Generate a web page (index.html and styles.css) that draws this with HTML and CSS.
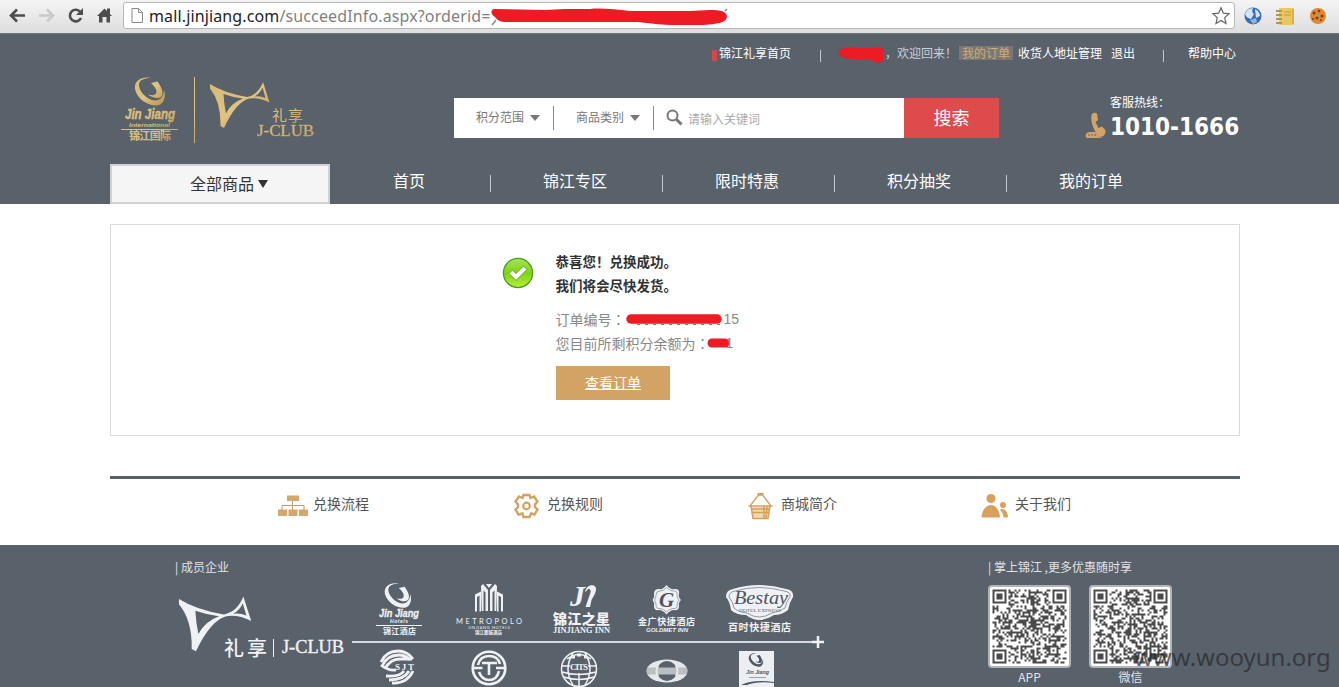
FILE: index.html
```html
<!DOCTYPE html>
<html lang="zh-CN">
<head>
<meta charset="utf-8">
<title>锦江礼享</title>
<link rel="stylesheet" href="styles.css">
</head>
<body>
<div class="browser">
  <svg class="tools" width="124" height="33" viewBox="0 0 124 33">
    <g fill="none" stroke="#4d4d4d" stroke-width="2.6">
      <path d="M11 15.5H25M17 9.5L11 15.5L17 21.5"/>
      <path stroke="#c9c9c9" d="M39 15.5H53M47 9.5L53 15.5L47 21.5"/>
      <path d="M80.500 12.200A5.800 5.800 0 1 0 81 18"/>
    </g>
    <path fill="#4d4d4d" d="M83 8v7h-7z"/>
    <path fill="#4d4d4d" d="M97 16L104.500 8.500L107 11V8.500H110V14L112 16H110V22.500H106.500V17H102.500V22.500H99V16z"/>
  </svg>
  <div class="address">
    <svg width="13" height="17" viewBox="0 0 13 17"><path d="M1 1.500H7.500L11.500 5.500V15.500H1zM7.500 1.500V5.500H11.500" fill="#fff" stroke="#8a8a8a"/></svg>
    <span class="url"><b>mall.jinjiang.com</b>/succeedInfo.aspx?orderid=</span>
    <svg class="redact" width="240" height="20" viewBox="0 0 240 20"><path d="M2 19l4-5M235 5l2-2" stroke="#888" stroke-width="1.500"/><path d="M4 3C0 4 1 9 5 11C8 15 11 16 16 16H148C165 18 172 19 184 19H214C226 18 236 17 237 11C237 5 230 4 220 4L200 5H140C125 3 110 2 100 3H75L55 4z" fill="#ed1c24"/></svg>
    <svg class="star" width="20" height="20" viewBox="0 0 20 20"><path d="M10 1.800L12.300 7.200L18 7.700L13.700 11.600L15 17.500L10 14.400L5 17.500L6.300 11.600L2 7.700L7.700 7.200z" fill="#fff" stroke="#666" stroke-width="1.200"/></svg>
  </div>
  <svg class="exts" width="100" height="33" viewBox="0 0 100 33">
    <circle cx="18" cy="16" r="8.500" fill="#3a69b5"/><path d="M10 14q2-6 8-6q-2 4 1 6l-3 5q-5-1-6-5M20 9q5 3 5 7l-4 2z" fill="#d4e4f6"/><path d="M15 20l6-2l1 4l-4 2z" fill="#8eb4de"/>
    <rect x="44" y="8" width="15" height="17" rx="1" fill="#e9c763"/><path d="M41 11h6M41 15h6M41 19h6M41 23h6" stroke="#b79643" stroke-width="2"/><path d="M49 12h7M49 15h7M58 9v15" stroke="#c49c35"/>
    <circle cx="83" cy="16" r="8" fill="#dc8b34"/><g fill="#7b3d12"><circle cx="79" cy="13" r="1.500"/><circle cx="84" cy="11" r="1.300"/><circle cx="87" cy="16" r="1.500"/><circle cx="82" cy="18" r="1.500"/><circle cx="86" cy="20" r="1"/><circle cx="78" cy="19" r="1"/></g>
  </svg>
</div>

<header class="header">
  <div class="topline">
    <i class="flag"></i><a class="home">锦江礼享首页</a><i class="bar bar-a"></i>
    <svg class="name" width="48" height="18" viewBox="0 0 48 18"><path d="M3 4C8 0 20 2 32 2C40 2 46 0 46 4V14C44 18 39 17 36 15C31 12 21 14 14 13C6 12-2 9 3 4z" fill="#ed1c24"/></svg>
    <span class="welcome">，欢迎回来<span class="mid">！</span></span><a class="orders">我的订单</a><a class="addr">收货人地址管理</a><a class="quit">退出</a><i class="bar bar-b"></i><a class="help">帮助中心</a>
  </div>
  <div class="brandrow">
    <svg class="logo" width="230" height="84" viewBox="110 66 230 84">
      <defs><linearGradient id="gold" x1="0" y1="0" x2="1" y2="1"><stop offset="0" stop-color="#d9b876"/><stop offset=".5" stop-color="#dfc382"/><stop offset="1" stop-color="#b98f4c"/></linearGradient></defs>
      <g fill="url(#gold)">
        <path id="ring" d="M151 78C140 76 134 82 135 89C137 99 148 106 157 105.500C163 105 166.500 98 164 90C163.500 97 160 101 154 100.500C146 99 139 91 139 85C139 80 144 78 151 78zM151 83L157.500 81.500C161.500 87 163.500 92 162 95.500C160 99.500 153 98.500 148 94.500C153 96 156.500 95 156.500 92C156.500 89 155 87 151 83z"/>
        <text x="125" y="119" class="script" font-size="14" stroke="#dfc382" stroke-width=".4" textLength="50" lengthAdjust="spacingAndGlyphs">Jin Jiang</text>
        <text x="129" y="127" class="script" font-size="6" textLength="41" lengthAdjust="spacingAndGlyphs">International</text>
        <rect x="121" y="129" width="57" height="1"/>
        <text x="129" y="140" class="cn" font-size="11" font-weight="700" textLength="42">锦江国际</text>
        <rect x="194" y="77" width="1" height="66"/>
        <path id="mark" fill-rule="evenodd" d="M210 84Q224 93 247 97Q258 95 263 82L269.500 102.500Q259 97 249 98.500Q236 102 224 128L220.500 126Q221 102 210 88.500zM223.500 94Q224 104 226 113.500Q231 103 243 98.500Q233 97.500 223.500 94zM254.500 96.500Q260 93.500 262.500 87.500L265.500 98Q260 95.500 254.500 96.500z"/>
        <text x="272" y="121" class="cn" font-size="15" textLength="31">礼享</text>
        <text x="257" y="136" class="roman" font-size="17" stroke="#c9a562" stroke-width=".3" textLength="57" lengthAdjust="spacingAndGlyphs">J-CLUB</text>
      </g>
    </svg>
    <div class="search">
      <div class="pick">积分范围<i class="tri"></i></div>
      <div class="pick">商品类别<i class="tri"></i></div>
      <svg width="18" height="18" viewBox="0 0 18 18"><circle cx="6.500" cy="6.500" r="5" fill="none" stroke="#777" stroke-width="2"/><path d="M10.500 10.500L15.500 15.500" stroke="#777" stroke-width="3"/></svg>
      <span class="hint">请输入关键词</span>
    </div>
    <div class="go">搜索</div>
    <div class="hotline">
      <svg width="22" height="27" viewBox="0 0 22 27"><path d="M7 2Q9 0 12 1.500L13 8L10.500 10L13.500 16L17 14.500L20.500 18Q21 22 17.500 24.500C13.500 26 11 22 9 17C6.500 11 5.500 6 7 2z" fill="#d3a468"/><path d="M1 22Q2 20 5 20H10L13 24L17 26H2Q0 25 1 22z" fill="#d3a468"/><path d="M3 23h9" stroke="#59616b" stroke-width="1" stroke-dasharray="2 1"/></svg>
      <div><p class="hot-label">客服热线<span class="mid">：</span></p><p class="hot-no">1010-1666</p></div>
    </div>
  </div>
  <nav class="nav">
    <div class="all">全部商品<i class="tri dark"></i></div>
    <a>首页</a><a>锦江专区</a><a>限时特惠</a><a>积分抽奖</a><a>我的订单</a>
  </nav>
</header>

<main class="main">
  <section class="card">
    <svg class="ok" width="32" height="32" viewBox="0 0 32 32"><defs><linearGradient id="lime" x1="0" y1="0" x2="0" y2="1"><stop offset="0" stop-color="#a6e35a"/><stop offset=".5" stop-color="#7fd312"/><stop offset="1" stop-color="#b4f03c"/></linearGradient></defs><circle cx="16" cy="16" r="14.600" fill="url(#lime)" stroke="#4b9a28" stroke-width="1.300"/><path d="M7 16.500L10.500 13L14 16.500L21.500 9L25 12.500L14 23.500z" fill="#fff" stroke="#5da521"/></svg>
    <div class="result">
      <h1>恭喜您<span class="mid">！</span>兑换成功。</h1>
      <h1>我们将会尽快发货。</h1>
      <p class="first">订单编号<span class="mid">：</span><svg width="99" height="14" viewBox="0 0 99 14"><path d="M6 7H92" stroke="#ed1c24" stroke-width="9.500" stroke-linecap="round"/><path d="M12 12.500h84" stroke="#a66" stroke-dasharray="3 5"/></svg><span class="num">15</span></p>
      <p>您目前所剩积分余额为<span class="mid">：</span><svg width="25" height="14" viewBox="0 0 25 14"><path d="M6 7H19" stroke="#ed1c24" stroke-width="9" stroke-linecap="round"/></svg><span class="cut">1</span></p>
      <a class="view">查看订单</a>
    </div>
  </section>
  <section class="services">
    <div><svg width="32" height="28" viewBox="0 0 32 28"><path d="M10 3.500h12v5.500H10zM1 17.500h9v6.500H1zM11.500 17.500h9v6.500h-9zM22 17.500h9v6.500h-9z" fill="#d3a86c"/><path d="M15.500 9v9M5 18v-4.500h22V18" fill="none" stroke="#c09a6a"/></svg>兑换流程</div>
    <div><svg width="32" height="28" viewBox="0 0 32 28"><path d="M12.500 3H18.500L19.500 6L23 4.500L26.500 9.500L24 12.500V15L26.500 17.500L23.500 22.500L20 21.500L18.500 25H12.500L11.500 21.500L7.500 22.500L4.500 17.500L7 15V12.500L4.500 9.500L8 4.500L11.500 6z" fill="none" stroke="#d0a263" stroke-width="2.400"/><circle cx="15.500" cy="14" r="3.300" fill="none" stroke="#d0a263" stroke-width="2.200"/></svg>兑换规则</div>
    <div><svg width="32" height="28" viewBox="0 0 32 28"><path d="M6 15H25L22.500 26H8.500z" fill="#f0d8b0"/><g fill="none" stroke="#d3a05c"><path d="M5 14L13.500 3H17.500L26 14" stroke-width="1.300"/><path d="M12.500 2h6" stroke-width="2"/><path d="M3.500 14H27.500M6 17H25M7 20.500H24" stroke-width="1.400"/><path d="M6 14L8 26.500H23L25 14M19 14V26M22 14L21 26" stroke-width="1.500"/></g></svg>商城简介</div>
    <div><svg width="32" height="28" viewBox="0 0 32 28"><g fill="#d8a05a"><circle cx="12" cy="6.500" r="4.500"/><path d="M2.500 25.500C3 17 8 13 12 13S20.500 17 21 25.500z"/><circle cx="24" cy="13" r="3"/><path d="M20.500 17.500c5-2 8.500 2 8.500 8H24.500C24.500 22 22.500 19 20.500 17.500z"/></g></svg>关于我们</div>
  </section>
</main>

<footer class="footer">
  <div class="members">
    <p class="foot-title">| 成员企业</p>
    <div class="group">
      <svg class="club" width="176" height="68" viewBox="170 594 176 68" fill="#f0f1f4">
        <use href="#mark" transform="translate(-76.200 499) scale(1.215 1.190)"/>
        <text x="224" y="656" class="cn" font-size="20" font-weight="500" textLength="43">礼享</text><rect x="273" y="639" width="1" height="18"/>
        <text x="282" y="653" class="roman" font-size="18" stroke="#f0f1f4" stroke-width=".4" textLength="62" lengthAdjust="spacingAndGlyphs">J-CLUB</text>
      </svg>
      <div class="brands">
        <div class="row">
          <svg width="94" height="60" viewBox="352 580 94 60" fill="#f0f1f4"><use href="#ring" transform="translate(266 515) scale(.88)"/><text x="379" y="617" class="script" font-size="10" stroke="#f0f1f4" stroke-width=".3" textLength="40" lengthAdjust="spacingAndGlyphs">Jin Jiang</text><text x="390" y="623" class="script" font-size="5" textLength="18">Hotels</text><path d="M376 625h46v1h-46z"/><text x="383" y="634" class="cn" font-size="8" font-weight="700" textLength="33">锦江酒店</text></svg>
          <svg width="86" height="60" viewBox="446 580 86 60" fill="#f0f1f4"><path d="M475 594.500l6-3v20h-1.500v-16l-2.500 1.500v14.500h-2zM503 594.500l-6-3v20h1.500v-16l2.500 1.500v14.500h2zM481 586l2-2l5 6v21h-2.500v-18.500l-2-2v20.500H481.700zM497 586l-2-2l-5 6v21h2.500v-18.500l2-2v20.500H496.300zM486 584h6l-3 4z"/><text x="456" y="624" font-family="Lato" font-size="7.500" textLength="66">METROPOLO</text><text x="468" y="629" font-family="Lato" font-size="4" textLength="42">JINJIANG HOTELS</text><text x="475" y="634" class="cn" font-size="4.500" font-weight="700" textLength="27">锦江都城酒店</text></svg>
          <svg width="98" height="60" viewBox="532 580 98 60" fill="#f0f1f4"><text x="570" y="606" font-family="Liberation Serif" font-style="italic" font-weight="700" font-size="30">J</text><path d="M585 592C587 583 597 584 596 590C595 595 593 597 591.500 600L590 607H585.500L590 594C592 590 589 587 586.500 591z"/><text x="553" y="624" class="cn" font-size="14" font-weight="900" textLength="57">锦江之星</text><text x="553" y="633" font-family="Liberation Serif" font-weight="700" font-size="9" textLength="57" lengthAdjust="spacingAndGlyphs">JINJIANG INN</text></svg>
          <svg width="74" height="60" viewBox="630 580 74 60" fill="#f0f1f4"><path d="M666.500 585Q670 590 675 589Q680 589 679 594Q678 597 681 600Q678 603 679 606Q679 611 674 610Q670 610 666.500 614.500Q663 610 659 610Q654 611 654 606Q655 603 652.500 600Q655 597 654 594Q654 589 659 589Q663 590 666.500 585z"/><path d="M666.500 587.500Q670 591.500 674 591Q678 591 677 595Q677 598 679 600Q677 602 677 605Q678 609 673 608.500Q669 609 666.500 612Q664 609 660 608.500Q656 609 656 605Q656 602 654.500 600Q656 598 656 595Q656 591 660 591Q663 591.500 666.500 587.500z" fill="none" stroke="#7d858e" stroke-width=".7"/><text x="659" y="607" font-family="Liberation Serif" font-style="italic" font-weight="700" font-size="21" fill="#4d545e">G</text><text x="638" y="625" class="cn" font-size="9" font-weight="700" textLength="57">金广快捷酒店</text><text x="646" y="632" class="script" font-size="6" textLength="42" lengthAdjust="spacingAndGlyphs">GOLDMET INN</text></svg>
          <svg width="110" height="60" viewBox="704 580 110 60" fill="#f0f1f4"><path d="M733 589Q759 581 786 589Q794 590 793 597Q789 603 788 610Q782 615 774 615Q759 625 746 615Q736 615 731 610Q730 602 726 597Q726 590 733 589z"/><path d="M735 591Q759 584 784 591Q791 592 790 597Q786 602 785 608Q779 612 772 613Q759 621 747 613Q738 612 734 608Q733 602 729 597Q729 592 735 591z" fill="none" stroke="#777f89" stroke-width=".8"/><text x="734" y="604" font-family="Liberation Serif" font-style="italic" font-size="18" textLength="54" lengthAdjust="spacingAndGlyphs" fill="#4d545e">Bestay</text><text x="739" y="612" font-family="Liberation Serif" font-size="5" textLength="42" lengthAdjust="spacingAndGlyphs" fill="#59616b">HOTEL EXPRESS</text><text x="728" y="631" class="cn" font-size="10" font-weight="700" textLength="63">百时快捷酒店</text></svg>
        </div>
        <div class="rail"><svg width="12" height="12" viewBox="0 0 12 12"><path d="M6 0V12M0 6H12" stroke="#f0f1f4" stroke-width="2.500"/></svg></div>
        <div class="row second">
          <svg width="94" height="40" viewBox="352 649 94 40" fill="none" stroke="#f0f1f4" stroke-width="2.800"><path d="M381 664Q386 653 398 653Q407 653 413 661M382 668Q387 657 399 657Q405 657 410 662M385 671Q390 661 400 661H412M413 673Q407 686 392 685M409 673Q404 682 389 682M404 673Q400 679 386 678M381 667Q388 673 396 672"/><text x="395" y="672" font-family="Liberation Serif" font-size="9" font-weight="700" fill="#f0f1f4" stroke="none" textLength="19">SJT</text></svg>
          <svg width="86" height="40" viewBox="446 649 86 40" fill="none" stroke="#f0f1f4" stroke-width="2.600"><circle cx="489" cy="670" r="16.300"/><path d="M473 670H482.500M496 670H506M478 667Q480 658 489 658Q498 658 500 666M479 674Q482 682 489 682Q497 682 499 673M482 665H497M489 665V677"/></svg>
          <svg width="98" height="40" viewBox="532 649 98 40" fill="none" stroke="#f0f1f4"><circle cx="579" cy="671" r="17.500" stroke-width="1.500"/><path d="M562 668H570M588 668H597M562 674Q579 679 596 674M564 679Q579 684 594 679M567 661Q579 652 591 661M573 655Q563 671 573 687M585 655Q595 671 585 687M579 675V689" stroke-width="1.500"/><text x="570" y="672" font-family="Liberation Serif" font-size="9" font-weight="700" fill="#f0f1f4" stroke="none" textLength="18">CITS</text><path d="M571 659h4M577 657h4M584 659h3" stroke-width="3"/></svg>
          <svg width="74" height="40" viewBox="630 649 74 40"><ellipse cx="667" cy="673" rx="20.500" ry="11.500" fill="#e6e8ec"/><circle cx="667" cy="673" r="10" fill="#59616b"/><path d="M647 669.500h40v7h-40z" fill="#b9bec5"/><path d="M658 668q-3 5 0 10M676 668q3 5 0 10" fill="none" stroke="#e6e8ec" stroke-width="2"/></svg>
          <svg width="110" height="40" viewBox="704 649 110 40"><path d="M739 653h35v40h-35z" fill="#eceef1"/><g fill="#4d5560"><use href="#ring" transform="translate(684 618) scale(.48)"/><text x="746" y="676" class="script" font-size="6" textLength="23" lengthAdjust="spacingAndGlyphs">Jin Jiang</text><path d="M749 679h17v.6h-17zM741 687Q753 681 774 684V685Q757 683 747 687z"/></g></svg>
        </div>
      </div>
    </div>
  </div>
  <div class="mobile">
    <p class="foot-title">| 掌上锦江 ,更多优惠随时享</p>
    <div class="codes">
      <figure><svg class="qr" data-seed="11" width="79" height="79" viewBox="0 0 79 79"></svg><figcaption>APP</figcaption></figure>
      <figure><svg class="qr" data-seed="29" width="79" height="79" viewBox="0 0 79 79"></svg><figcaption>微信</figcaption></figure>
    </div>
  </div>
  <span class="mark">www.wooyun.org</span>
</footer>
<script src="codes.js"></script>
</body>
</html>
```

FILE: styles.css
```css
* { box-sizing: border-box; }
body { margin: 0; height: 687px; overflow: hidden; background: #fff; color: #666; font: 12px/20px "Noto Sans CJK SC", sans-serif; }
p, h1, figure { margin: 0; }
svg { display: block; flex: none; }
.script { font-family: "Liberation Sans", sans-serif; font-weight: 700; font-style: italic; }
.cn { font-family: "Noto Sans CJK SC", sans-serif; }
.roman { font-family: "Liberation Serif", serif; }
/* Centred full-width punctuation */
.mid { font-family: "Noto Sans CJK TC", sans-serif; }

/* Browser toolbar */
.browser { display: flex; height: 34px; background: linear-gradient(#f4f4f4, #dedede); border-bottom: 1px solid #6d7479; }
.address { display: flex; align-items: center; width: 1112px; height: 27px; margin: 2px 0 0 -1px; padding-left: 7px; background: #fff; border: 1px solid #b5b5b5; border-radius: 3px; }
.url { width: 341px; margin-left: 5px; color: #808080; font: 16px/24px "Noto Sans", sans-serif; letter-spacing: .13px; white-space: nowrap; }
.url b { color: #222; font-weight: 400; }
.redact { margin-top: 1px; }
.star { margin-left: 481px; }

/* Header */
.header { height: 170px; padding-left: 110px; background: #59616b; color: #fff; }
.topline { display: flex; align-items: center; height: 39px; padding: 0 0 1px 602px; white-space: nowrap; }
.flag { width: 5px; height: 11px; margin: 4px 2px 0 0; background: #d94848; }
.home { width: 72px; }
.bar { width: 1px; height: 12px; margin-top: 5px; background: #c3c7cb; }
.bar-a { margin-left: 29px; }
.name { margin: 3px 0 0 16px; }
.welcome { width: 74px; color: #cdd0d4; }
.orders { width: 54px; height: 14px; line-height: 13px; text-align: center; background: #7b7874; color: #d3ab74; }
.addr { margin-left: 5px; }
.quit { margin-left: 9px; }
.bar-b { margin-left: 28px; }
.help { margin-left: 24px; }
.brandrow { display: flex; height: 91px; }
.logo { margin-top: -7px; }
.search { display: flex; align-items: center; width: 450px; height: 40px; margin: 25px 0 0 114px; background: #fff; color: #777; }
.pick { display: flex; align-items: center; width: 100px; height: 24px; padding: 0 0 2px 22px; border-right: 1px solid #888; }
.tri { margin: 2px 0 0 6px; border: 5px solid transparent; border-top: 6px solid #777; border-bottom: 0; }
.search svg { margin-left: 12px; }
.hint { margin: 1px 0 0 4px; color: #aaa; }
.go { width: 95px; height: 40px; margin-top: 25px; background: #dd4b4c; font-size: 18px; line-height: 39px; text-align: center; }
.hotline { display: flex; margin-left: 86px; }
.hotline svg { margin: 39px 3px 0 0; }
.hot-label { margin-top: 19px; line-height: 20px; }
.hot-no { margin-top: 1px; font: bold 24px/28px "DejaVu Sans Condensed", "DejaVu Sans", sans-serif; font-stretch: condensed; white-space: nowrap; }
.nav { display: flex; height: 40px; }
.all { display: flex; align-items: center; justify-content: center; width: 220px; height: 40px; padding: 0 0 2px 18px; background: #f5f5f5; border: 2px solid #d0d2d5; color: #333; font-size: 16px; }
.tri.dark { border-top: 8px solid #333; margin-left: 4px; }
.nav a { position: relative; width: 172px; padding-right: 2px; font-size: 16px; line-height: 32px; text-align: center; }
.nav a:nth-of-type(1) { width: 160px; }
.nav a + a::before { content: ""; position: absolute; left: 0; top: 11px; width: 1px; height: 17px; background: #c4c7cb; }

/* Confirmation */
.main { height: 341px; padding: 20px 0 0 110px; }
.card { display: flex; width: 1130px; height: 212px; padding-left: 391px; border: 1px solid #dadada; }
.ok { margin-top: 32px; }
.result { margin: 24px 0 0 21.5px; font-size: 14px; line-height: 24px; }
.result h1 { font-size: 13.500px; line-height: 24px; color: #333; }
.result p { display: flex; align-items: center; color: #888; font-size: 14px; height: 24px; white-space: nowrap; }
.result .first { margin-top: 10px; }
.first svg { margin-left: -1px; }
.result p:not(.first) svg { margin-left: -4px; }
.num, .cut { font-family: "Liberation Sans", sans-serif; }
.cut { margin-left: -5px; }
.view { display: block; width: 114px; height: 34px; margin: 11px 0 0 .5px; background: #d2a365; color: #fff; text-align: center; text-decoration: underline; line-height: 32px; }
.services { display: flex; width: 1130px; height: 60px; margin-top: 40px; padding-left: 167px; border-top: 3px solid #59616b; color: #555; font-size: 14px; }
.services div { display: flex; align-items: center; width: 234px; height: 52px; padding-bottom: 4px; }
.services svg { margin: 6px 4px 0 0; }

/* Footer */
.footer { position: relative; display: flex; height: 142px; padding-left: 170px; overflow: hidden; background: #59616b; color: #e2e4e7; }
.members { width: 818px; padding: 12px 0 0 5px; }
.foot-title { line-height: 20px; white-space: nowrap; }
.group { display: flex; margin-left: -5px; }
.club { margin-top: 17px; }
.brands { margin: 3px 0 0 6px; }
.row { display: flex; width: 462px; }
.row.second { margin-top: 1px; }
.rail { display: flex; justify-content: flex-end; align-items: center; width: 472px; height: 8px; margin-top: -2px; background: linear-gradient(#d5dae0, #d5dae0) 0 3px / 465px 2px no-repeat; }
.mobile { padding-top: 12px; }
.codes { display: flex; gap: 18px; margin-top: 8px; }
.codes figure { width: 83px; text-align: center; }
.qr { width: 83px; height: 83px; padding: 2px; background: #b1b5ba; border-radius: 4px; }
.codes figcaption { line-height: 20px; margin-top: -1px; }
.mark { position: absolute; left: 1134px; top: 95px; color: rgba(40, 42, 46, .72); font: 24px/34px "Noto Sans", sans-serif; }
```

FILE: codes.js
```js
const SIZE = 37;

// Finder squares sit in three corners of each code.
function finder(x, y) {
  for (const [fx, fy] of [[0, 0], [SIZE - 7, 0], [0, SIZE - 7]]) {
    const dx = x - fx, dy = y - fy;
    if (dx >= -1 && dx <= 7 && dy >= -1 && dy <= 7) {
      const ring = Math.max(Math.abs(dx - 3), Math.abs(dy - 3));
      return ring === 3 || ring <= 1;
    }
  }
  const r = Math.max(Math.abs(x - 30), Math.abs(y - 30));
  return r <= 2 ? r !== 1 : null;
}

document.querySelectorAll(".qr").forEach((svg) => {
  let seed = Number(svg.dataset.seed);
  let d = "";
  for (let y = 0; y < SIZE; y++) {
    for (let x = 0; x < SIZE; x++) {
      seed = (seed * 1103515245 + 12345) % 2147483648;
      const fixed = finder(x, y);
      if (fixed === null ? seed / 2147483648 < 0.48 : fixed) {
        d += `M${x * 2 + 2.5} ${y * 2 + 2.5}h2v2h-2z`;
      }
    }
  }
  svg.innerHTML = `<rect width="79" height="79" fill="#fff"/><path fill="#4a4a4a" d="${d}"/>`;
});
```
